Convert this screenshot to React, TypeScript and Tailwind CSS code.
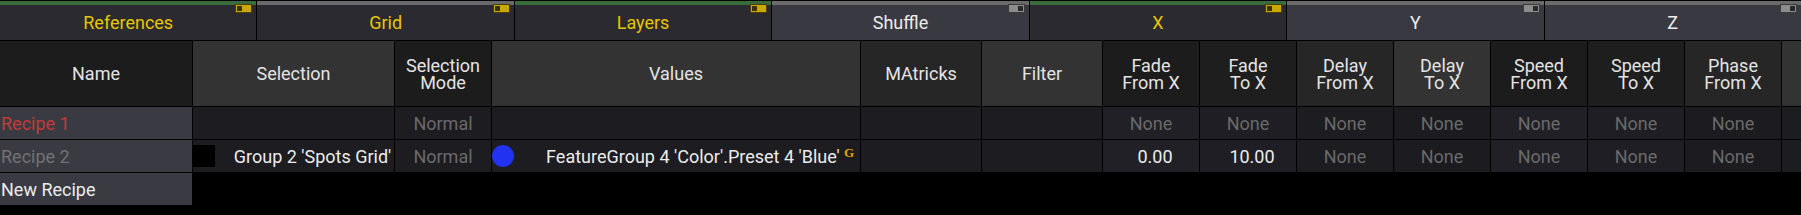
import React from 'react';

type Tab = { label: string; active: boolean; on: boolean; strip: 'green' | 'gray' };

const tabs: Tab[] = [
  { label: 'References', active: true, on: true, strip: 'green' },
  { label: 'Grid', active: true, on: true, strip: 'gray' },
  { label: 'Layers', active: true, on: true, strip: 'green' },
  { label: 'Shuffle', active: false, on: false, strip: 'gray' },
  { label: 'X', active: true, on: true, strip: 'green' },
  { label: 'Y', active: false, on: false, strip: 'gray' },
  { label: 'Z', active: false, on: false, strip: 'gray' },
];

const headers: { label: React.ReactNode; bg: string }[] = [
  { label: 'Name', bg: 'bg-[#1c1c1c]' },
  { label: 'Selection', bg: 'bg-[#333333]' },
  { label: <>Selection<br />Mode</>, bg: 'bg-[#1c1c1c]' },
  { label: 'Values', bg: 'bg-[#333333]' },
  { label: 'MAtricks', bg: 'bg-[#262626]' },
  { label: 'Filter', bg: 'bg-[#333333]' },
  { label: <>Fade<br />From X</>, bg: 'bg-[#1c1c1c]' },
  { label: <>Fade<br />To X</>, bg: 'bg-[#1e1e1e]' },
  { label: <>Delay<br />From X</>, bg: 'bg-[#262626]' },
  { label: <>Delay<br />To X</>, bg: 'bg-[#333333]' },
  { label: <>Speed<br />From X</>, bg: 'bg-[#1c1c1c]' },
  { label: <>Speed<br />To X</>, bg: 'bg-[#1e1e1e]' },
  { label: <>Phase<br />From X</>, bg: 'bg-[#262626]' },
  { label: '', bg: 'bg-[#333333]' },
];

// data cell backgrounds for the 7 timing columns
const timingBg = [
  'bg-[#202026]',
  'bg-[#1e1e24]',
  'bg-[#1c1c21]',
  'bg-[#1b1b20]',
  'bg-[#202026]',
  'bg-[#1e1e24]',
  'bg-[#1b1b20]',
];

const Toggle = ({ on }: { on: boolean }) => (
  <div
    className={`absolute right-1 top-[3px] flex h-[9px] w-[17px] items-center border px-px ${
      on
        ? 'justify-start border-[#4a3f00] bg-[#c9a800]'
        : 'justify-end border-[#3a3a3a] bg-[#8c8c8c]'
    }`}
  >
    <div className={`h-[5px] w-[5px] ${on ? 'bg-[#3a3200]' : 'bg-[#2a2a2a]'}`} />
  </div>
);

const None = ({ bg }: { bg: string }) => (
  <div className={`flex items-center justify-center text-[#6a6a6a] ${bg}`}>None</div>
);

const Value = ({ bg, children }: { bg: string; children: React.ReactNode }) => (
  <div className={`flex items-center justify-center pl-2 text-[#ececec] ${bg}`}>{children}</div>
);

export default function App() {
  const cell = 'bg-[#1c1c21]';
  return (
    <div
      className="h-[215px] w-[1801px] overflow-hidden bg-black text-[18px]"
      style={{ fontFamily: 'Roboto, "Noto Sans", sans-serif' }}
    >
      {/* tab bar */}
      <div className="flex h-10 gap-px pt-px">
        {tabs.map((t) => (
          <div
            key={t.label}
            className={`relative flex flex-1 flex-col ${t.active ? 'bg-[#2a2a30]' : 'bg-[#393941]'}`}
          >
            <div className={`h-1 ${t.strip === 'green' ? 'bg-[#3a6b3a]' : 'bg-[#6a6a6a]'}`} />
            <div
              className={`flex flex-1 items-center justify-center pb-px ${
                t.active ? 'text-[#e8c600]' : 'text-[#ececec]'
              }`}
            >
              {t.label}
            </div>
            <Toggle on={t.on} />
          </div>
        ))}
      </div>

      {/* table */}
      <div className="mt-px grid grid-cols-[192px_201px_96px_368px_120px_120px_repeat(7,96px)_1fr] grid-rows-[65px_32px_32px_32px] gap-px">
        {headers.map((h, i) => (
          <div
            key={i}
            className={`flex items-center justify-center text-center leading-[17px] text-[#e4e4e4] ${h.bg}`}
          >
            <span>{h.label}</span>
          </div>
        ))}

        {/* Recipe 1 */}
        <div className="flex items-center bg-[#3a3a43] pl-px text-[#c23a3a]">Recipe 1</div>
        <div className={cell} />
        <div className={`flex items-center justify-center text-[#6a6a6a] ${cell}`}>Normal</div>
        <div className={cell} />
        <div className={cell} />
        <div className={cell} />
        {timingBg.map((bg, i) => (
          <None key={i} bg={bg} />
        ))}
        <div className={cell} />

        {/* Recipe 2 */}
        <div className="flex items-center bg-[#3a3a43] pl-px text-[#727272]">Recipe 2</div>
        <div className={`flex items-center ${cell}`}>
          <div className="h-[22px] w-[22px] bg-black" />
          <span className="flex-1 pl-4 text-center text-[#ececec]">Group 2 'Spots Grid'</span>
        </div>
        <div className={`flex items-center justify-center text-[#6a6a6a] ${cell}`}>Normal</div>
        <div className={`flex items-center ${cell}`}>
          <div className="h-[22px] w-[22px] rounded-full bg-[#2132f0]" />
          <span className="flex-1 pl-7 text-center text-[#ececec]">
            FeatureGroup 4 'Color'.Preset 4 'Blue'
          </span>
          <span
            className="mb-2 mr-[6px] text-[13px] font-bold leading-none text-[#e3a400]"
            style={{ fontFamily: '"Liberation Serif", serif' }}
          >
            G
          </span>
        </div>
        <div className={cell} />
        <div className={cell} />
        <Value bg={timingBg[0]}>0.00</Value>
        <Value bg={timingBg[1]}>10.00</Value>
        {timingBg.slice(2).map((bg, i) => (
          <None key={i} bg={bg} />
        ))}
        <div className={cell} />

        {/* New Recipe */}
        <div className="flex items-center bg-[#3a3a43] pl-px text-[#ececec]">New Recipe</div>
      </div>
    </div>
  );
}
